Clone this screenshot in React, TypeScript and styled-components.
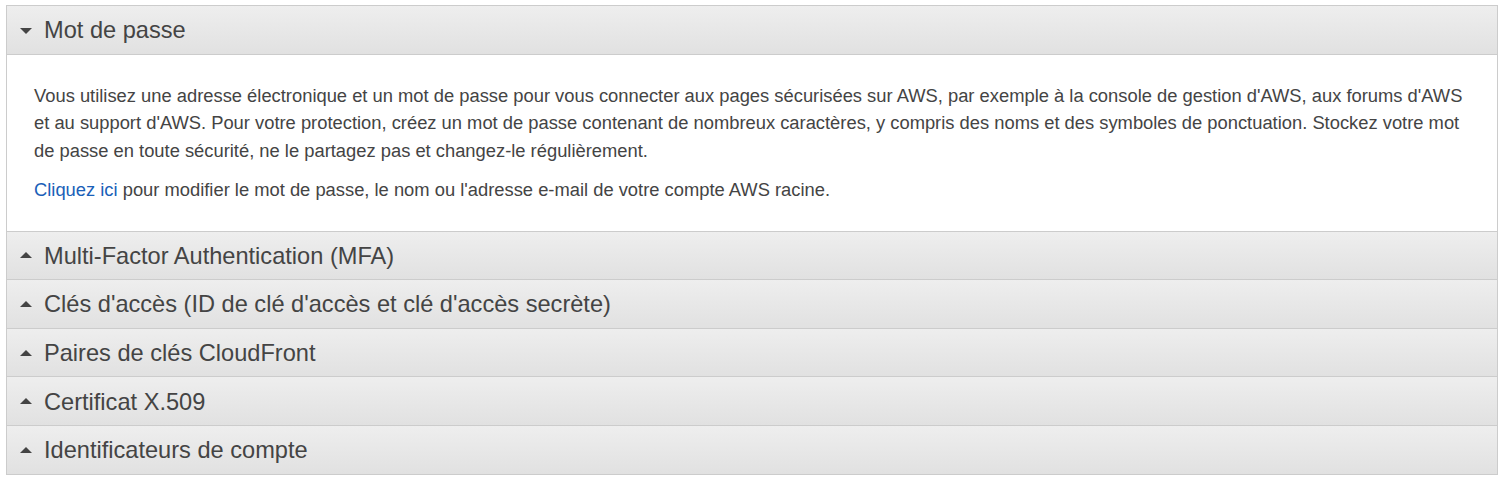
import React from "react";
import styled, { createGlobalStyle } from "styled-components";

const Global = createGlobalStyle`
  html, body { margin: 0; padding: 0; background: #fff; }
  body { font-family: "Liberation Sans", Arial, sans-serif; color: #444; }
`;

const Page = styled.div`
  padding: 5px 7px 8px 6px;
`;

const Accordion = styled.div`
  border: 1px solid #ccc;
  border-bottom: none;
`;

const Section = styled.section`
  border-bottom: 1px solid #ccc;
`;

const Header = styled.div`
  display: flex;
  align-items: center;
  height: 47.6px;
  box-sizing: border-box;
  padding-left: 13px;
  padding-top: 2px;
  background: linear-gradient(#eeeeee, #e1e1e1);
  font-size: 23.6px;
  color: #444;
  cursor: pointer;
`;

const Caret = styled.span<{ $open: boolean }>`
  width: 0;
  height: 0;
  border-left: 6px solid transparent;
  border-right: 6px solid transparent;
  ${(p) =>
    p.$open
      ? "border-top: 6px solid #444;"
      : "border-bottom: 6px solid #444;"}
  margin-right: 12px;
  margin-top: ${(p) => (p.$open ? "0px" : "-2px")};
`;

const Body = styled.div`
  border-top: 1px solid #ccc;
  background: #fff;
  padding: 27px 27px 27px 27px;
  font-size: 18.35px;
  line-height: 27.5px;
  color: #444;
`;

const Para = styled.p`
  margin: 0;
  & + & {
    margin-top: 12px;
  }
`;

const Link = styled.a`
  color: #1a60b8;
  text-decoration: none;
`;

const items = [
  "Multi-Factor Authentication (MFA)",
  "Clés d'accès (ID de clé d'accès et clé d'accès secrète)",
  "Paires de clés CloudFront",
  "Certificat X.509",
  "Identificateurs de compte",
];

export default function App() {
  return (
    <>
      <Global />
      <Page>
        <Accordion>
          <Section>
            <Header>
              <Caret $open />
              Mot de passe
            </Header>
            <Body>
              <Para>
                Vous utilisez une adresse électronique et un mot de passe pour vous connecter aux pages
                sécurisées sur AWS, par exemple à la console de gestion d'AWS, aux forums d'AWS et au
                support d'AWS. Pour votre protection, créez un mot de passe contenant de nombreux
                caractères, y compris des noms et des symboles de ponctuation. Stockez votre mot de passe
                en toute sécurité, ne le partagez pas et changez-le régulièrement.
              </Para>
              <Para>
                <Link href="#">Cliquez ici</Link> pour modifier le mot de passe, le nom ou l'adresse
                e-mail de votre compte AWS racine.
              </Para>
            </Body>
          </Section>
          {items.map((t) => (
            <Section key={t}>
              <Header>
                <Caret $open={false} />
                {t}
              </Header>
            </Section>
          ))}
        </Accordion>
      </Page>
    </>
  );
}
